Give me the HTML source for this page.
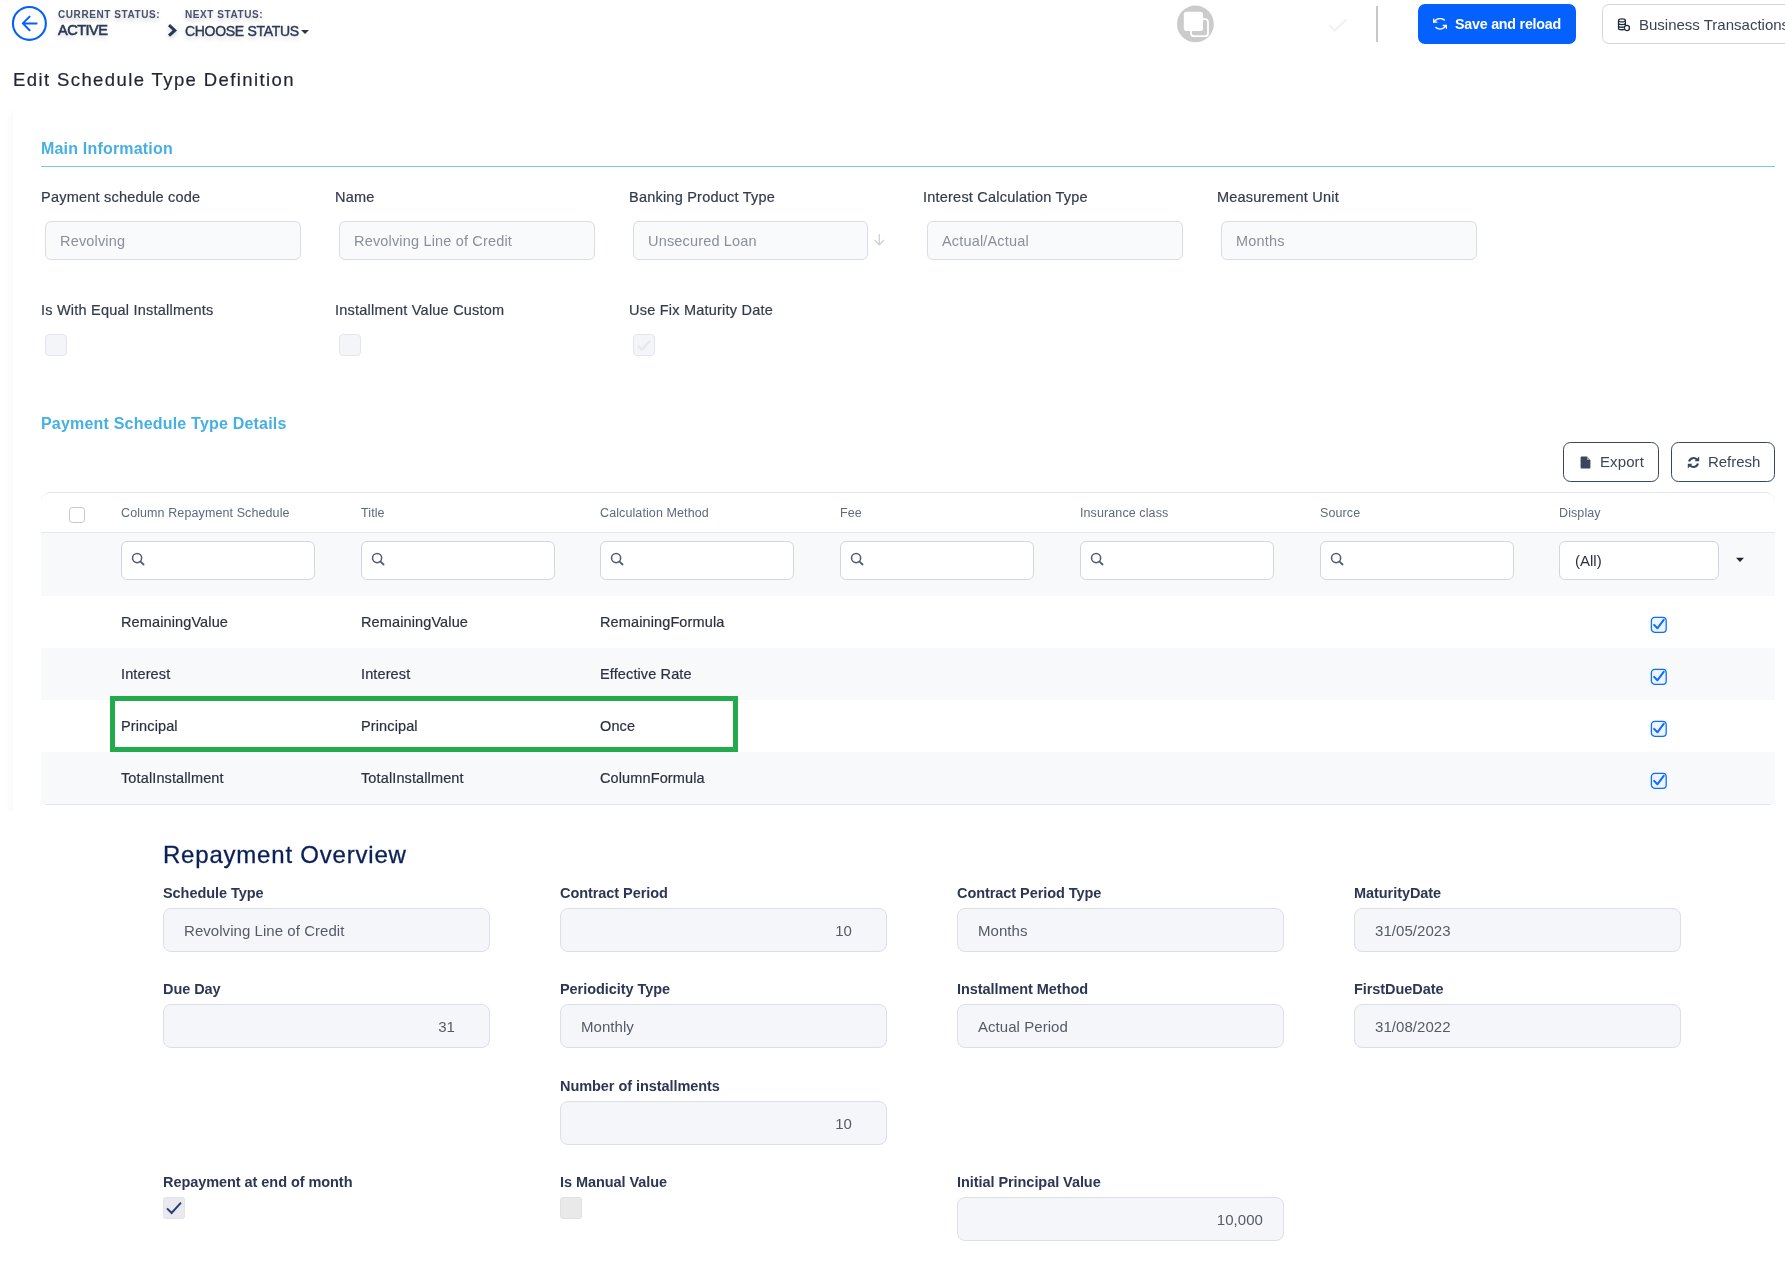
<!DOCTYPE html>
<html lang="en">
<head>
<meta charset="utf-8">
<title>Edit Schedule Type Definition</title>
<style>
*{box-sizing:border-box;margin:0;padding:0}
html,body{width:1785px;height:1277px;overflow:hidden;background:#fff}
body{position:relative;will-change:transform;font-family:"Liberation Sans",sans-serif;color:#2d3445;-webkit-font-smoothing:antialiased}
.a{position:absolute;white-space:nowrap;line-height:1}
/* header */
.st-s{font-size:10px;font-weight:700;letter-spacing:.58px;color:#46506a;text-shadow:0 3px 5px rgba(0,0,0,.2)}
.st-b{font-size:14px;font-weight:700;letter-spacing:-.4px;color:#2c3854;text-shadow:0 3px 5px rgba(0,0,0,.2)}
.title{font-size:18.5px;letter-spacing:1.4px;color:#1f2533;-webkit-text-stroke:.2px #1f2533}
.btn-blue{background:#0561fc;border-radius:7px;color:#fff;font-weight:700;font-size:15px}
.btn-w{background:#fff;border:1px solid #d3d7df;border-radius:7px;color:#3a4254;font-size:15px}
/* section 1 */
.sec{font-size:16px;font-weight:700;color:#45b0e4;letter-spacing:-.1px}
.lbl{font-size:14.5px;color:#333b4d;letter-spacing:.22px;-webkit-text-stroke:.2px #333b4d}
.inp{height:39px;border:1px solid #d9dce3;border-radius:6px;background:#f9fafc;color:#8a8f9b;font-size:14.5px;line-height:38.5px;padding-left:14px;letter-spacing:.17px}
.cb{width:22px;height:22px;border:1px solid #e3e6ed;border-radius:4px;background:#f4f5f9}
/* grid */
.btn-o{height:40px;border:1px solid #3a465c;border-radius:7.5px;background:#fff;color:#3a465c;font-size:15px;line-height:38px}
.th{font-size:12.5px;color:#5e6a7d;letter-spacing:.1px}
.fi{height:39px;border:1px solid #d2d6de;border-radius:6px;background:#fff}
.td{font-size:14.5px;color:#2b3140;letter-spacing:.12px;-webkit-text-stroke:.2px #2b3140}
.row{left:41px;width:1734px;height:52px}
.ck{width:17px;height:17px}
/* section 2 */
.h2{font-size:24px;color:#0a2058;letter-spacing:.79px;-webkit-text-stroke:.3px #0a2058}
.lb2{font-size:14.5px;font-weight:700;color:#2d3755;letter-spacing:-.06px}
.in2{width:327px;height:44px;border:1px solid #dcdfe6;border-radius:8px;background:#f5f6fa;color:#555b66;font-size:15px;line-height:44px;padding:0 20px;letter-spacing:.05px}
.r{text-align:right;padding-right:34px}
</style>
</head>
<body>
<!-- CARD -->
<div class="a" style="left:0;top:95px;width:1785px;height:716px;overflow:hidden"><div style="position:absolute;left:12.5px;top:12px;width:1800px;height:800px;border-radius:9px;background:#fff;box-shadow:-2px 3px 7px rgba(30,40,60,.038)"></div></div>
<!-- HEADER -->
<svg class="a" style="left:11px;top:5px" width="37" height="37" viewBox="0 0 37 37"><circle cx="18.4" cy="18.4" r="16.45" fill="#fff" stroke="#0561fc" stroke-width="2.1"/><path d="M25.6 18.4H12.2M18.6 11.6L11.8 18.4L18.6 25.2" fill="none" stroke="#0561fc" stroke-width="2" stroke-linecap="round" stroke-linejoin="round"/></svg>
<div class="a st-s" style="left:58px;top:10px">CURRENT STATUS:</div>
<div class="a st-b" style="left:58px;top:22.5px;font-size:14.5px;font-weight:400;letter-spacing:-.5px;-webkit-text-stroke:.6px #2c3854">ACTIVE</div>
<svg class="a" style="left:166px;top:22px;filter:drop-shadow(0 2px 2px rgba(0,0,0,.18))" width="14" height="17" viewBox="0 0 14 17"><path d="M3 3.2L8.8 8.4L3 13.6" fill="none" stroke="#2c3854" stroke-width="3"/></svg>
<div class="a st-s" style="left:185px;top:10px">NEXT STATUS:</div>
<div class="a st-b" style="left:185px;top:23.6px;font-size:14px;font-weight:400;letter-spacing:-.3px;-webkit-text-stroke:.4px #2c3854">CHOOSE STATUS</div>
<svg class="a" style="left:300px;top:29px" width="10" height="6" viewBox="0 0 10 6"><path d="M1 1h8L5 5z" fill="#2d3650"/></svg>
<div class="a title" style="left:13px;top:71px">Edit Schedule Type Definition</div>
<!-- header right -->
<svg class="a" style="left:1176px;top:5px" width="40" height="40" viewBox="0 0 40 40"><circle cx="19.4" cy="18.95" r="18.4" fill="#cbcbcb"/><rect x="15" y="14.1" width="17" height="17.05" rx="3" fill="none" stroke="#fff" stroke-width="1.8"/><rect x="7.8" y="6.8" width="19.2" height="19.2" rx="2.8" fill="#fff"/></svg>
<svg class="a" style="left:1327px;top:17px" width="22" height="16" viewBox="0 0 22 16"><path d="M2.5 8.5L7.8 13.5L19.5 2.5" fill="none" stroke="#f1f1f1" stroke-width="2.3"/></svg>
<div class="a" style="left:1376px;top:6px;width:2px;height:36px;background:#c6c6c6"></div>
<div class="a btn-blue" style="left:1418px;top:4px;width:158px;height:40px"></div>
<svg class="a" style="left:1433px;top:18.2px" width="14.2" height="11.6" viewBox="22.8 31.1 210.4 193.8" preserveAspectRatio="none"><g fill="none" stroke="#fff" stroke-width="22" stroke-linecap="round" stroke-linejoin="round"><polyline points="79.8 99.7 31.8 99.7 31.8 51.7"/><path d="M190.2,65.8a87.9,87.9,0,0,0-124.4,0L31.8,99.7"/><polyline points="176.2 156.3 224.2 156.3 224.2 204.3"/><path d="M65.8,190.2a87.9,87.9,0,0,0,124.4,0l34-33.9"/></g></svg>
<div class="a" style="left:1455px;top:17px;color:#fff;font-size:14.25px;font-weight:700;letter-spacing:-.22px">Save and reload</div>
<div class="a btn-w" style="left:1602px;top:4px;width:200px;height:40px"></div>
<svg class="a" style="left:1616px;top:17px" width="16" height="16" viewBox="0 0 16 16"><g fill="none" stroke="#222a3b" stroke-width="1.3"><ellipse cx="5.95" cy="3.4" rx="3.45" ry="1.55"/><path d="M2.5 3.4v7.8c0 .85 1.55 1.55 3.45 1.55s3.45-.7 3.45-1.55V3.4M2.5 6c0 .85 1.55 1.55 3.45 1.55S9.4 6.85 9.4 6M2.5 8.7c0 .85 1.55 1.55 3.45 1.55S9.4 9.55 9.4 8.7"/><circle cx="10.9" cy="11" r="2.55" fill="#fff"/></g></svg>
<div class="a" style="left:1639px;top:16.5px;color:#3a4254;font-size:15px">Business Transactions</div>
<!-- SECTION 1 -->
<div class="a sec" style="left:41px;top:141px;letter-spacing:.19px">Main Information</div>
<div class="a" style="left:41px;top:166px;width:1734px;height:1px;background:#7cc4e8"></div>
<div class="a lbl" style="left:41px;top:190px">Payment schedule code</div>
<div class="a lbl" style="left:335px;top:190px">Name</div>
<div class="a lbl" style="left:629px;top:190px">Banking Product Type</div>
<div class="a lbl" style="left:923px;top:190px">Interest Calculation Type</div>
<div class="a lbl" style="left:1217px;top:190px">Measurement Unit</div>
<div class="a inp" style="left:45px;top:221px;width:256px">Revolving</div>
<div class="a inp" style="left:339px;top:221px;width:256px">Revolving Line of Credit</div>
<div class="a inp" style="left:633px;top:221px;width:235px">Unsecured Loan</div>
<svg class="a" style="left:873px;top:233px" width="13" height="14" viewBox="0 0 13 14"><path d="M6.3 1.2v10.2M1.6 7l4.7 4.7L11 7" fill="none" stroke="#d0d2d6" stroke-width="1.4"/></svg>
<div class="a inp" style="left:927px;top:221px;width:256px">Actual/Actual</div>
<div class="a inp" style="left:1221px;top:221px;width:256px">Months</div>
<div class="a lbl" style="left:41px;top:303px">Is With Equal Installments</div>
<div class="a lbl" style="left:335px;top:303px">Installment Value Custom</div>
<div class="a lbl" style="left:629px;top:303px">Use Fix Maturity Date</div>
<div class="a cb" style="left:45px;top:334px"></div>
<div class="a cb" style="left:339px;top:334px"></div>
<div class="a cb" style="left:633px;top:334px"></div>
<svg class="a" style="left:636px;top:338px" width="16" height="14" viewBox="0 0 16 14"><path d="M2 7.8L5.8 11.6L14 2.8" fill="none" stroke="#e6e9ee" stroke-width="2.6"/></svg>
<div class="a sec" style="left:41px;top:416px;letter-spacing:.2px">Payment Schedule Type Details</div>
<!-- grid toolbar -->
<div class="a btn-o" style="left:1563px;top:442px;width:96px"></div>
<svg class="a" style="left:1579.5px;top:455.8px" width="11" height="13" viewBox="0 0 11 13"><path d="M.6 1.4A.9.9 0 0 1 1.5.5H6.9L10.4 4V11.6a.9.9 0 0 1-.9.9H1.5a.9.9 0 0 1-.9-.9z" fill="#3a465c"/><path d="M7 .6V3.9H10.3z" fill="#9aa3b3"/></svg>
<div class="a" style="left:1600px;top:454px;font-size:15px;color:#3a465c;letter-spacing:.1px">Export</div>
<div class="a btn-o" style="left:1671px;top:442px;width:104px"></div>
<svg class="a" style="left:1687px;top:455.5px" width="13" height="13" viewBox="0 0 13 13"><path d="M2.1 5.5A4.5 4.5 0 0 1 9.9 3.6M10.9 7.5A4.5 4.5 0 0 1 3.1 9.4" fill="none" stroke="#3a465c" stroke-width="2.1"/><path d="M12.2.6v4.6H7.6zM.8 12.4V7.8h4.6z" fill="#3a465c"/></svg>
<div class="a" style="left:1708px;top:454px;font-size:15px;color:#3a465c;letter-spacing:-.05px">Refresh</div>
<!-- GRID -->
<div class="a" style="left:41px;top:492px;width:1734px;height:41px;border-top:1px solid #e3e6eb;border-radius:9px 9px 0 0;border-bottom:1px solid #e6e8ed"></div>
<div class="a" style="left:69px;top:507px;width:16px;height:16px;border:1px solid #c3c8d1;border-radius:3.5px;background:#fff"></div>
<div class="a th" style="left:121px;top:507px">Column Repayment Schedule</div>
<div class="a th" style="left:361px;top:507px">Title</div>
<div class="a th" style="left:600px;top:507px">Calculation Method</div>
<div class="a th" style="left:840px;top:507px">Fee</div>
<div class="a th" style="left:1080px;top:507px">Insurance class</div>
<div class="a th" style="left:1320px;top:507px">Source</div>
<div class="a th" style="left:1559px;top:507px">Display</div>
<div class="a" style="left:41px;top:533px;width:1734px;height:63px;background:#f8f9fb"></div>
<div class="a fi" style="left:121px;top:541px;width:193.5px"></div>
<svg class="a" style="left:131px;top:552px" width="14" height="14" viewBox="0 0 14 14"><circle cx="6.1" cy="6.1" r="4.55" fill="none" stroke="#525d76" stroke-width="1.55"/><path d="M9.5 9.6L12.6 12.5" stroke="#525d76" stroke-width="1.8" stroke-linecap="round"/></svg>
<div class="a fi" style="left:361px;top:541px;width:193.5px"></div>
<svg class="a" style="left:371px;top:552px" width="14" height="14" viewBox="0 0 14 14"><circle cx="6.1" cy="6.1" r="4.55" fill="none" stroke="#525d76" stroke-width="1.55"/><path d="M9.5 9.6L12.6 12.5" stroke="#525d76" stroke-width="1.8" stroke-linecap="round"/></svg>
<div class="a fi" style="left:600px;top:541px;width:193.5px"></div>
<svg class="a" style="left:610px;top:552px" width="14" height="14" viewBox="0 0 14 14"><circle cx="6.1" cy="6.1" r="4.55" fill="none" stroke="#525d76" stroke-width="1.55"/><path d="M9.5 9.6L12.6 12.5" stroke="#525d76" stroke-width="1.8" stroke-linecap="round"/></svg>
<div class="a fi" style="left:840px;top:541px;width:193.5px"></div>
<svg class="a" style="left:850px;top:552px" width="14" height="14" viewBox="0 0 14 14"><circle cx="6.1" cy="6.1" r="4.55" fill="none" stroke="#525d76" stroke-width="1.55"/><path d="M9.5 9.6L12.6 12.5" stroke="#525d76" stroke-width="1.8" stroke-linecap="round"/></svg>
<div class="a fi" style="left:1080px;top:541px;width:193.5px"></div>
<svg class="a" style="left:1090px;top:552px" width="14" height="14" viewBox="0 0 14 14"><circle cx="6.1" cy="6.1" r="4.55" fill="none" stroke="#525d76" stroke-width="1.55"/><path d="M9.5 9.6L12.6 12.5" stroke="#525d76" stroke-width="1.8" stroke-linecap="round"/></svg>
<div class="a fi" style="left:1320px;top:541px;width:193.5px"></div>
<svg class="a" style="left:1330px;top:552px" width="14" height="14" viewBox="0 0 14 14"><circle cx="6.1" cy="6.1" r="4.55" fill="none" stroke="#525d76" stroke-width="1.55"/><path d="M9.5 9.6L12.6 12.5" stroke="#525d76" stroke-width="1.8" stroke-linecap="round"/></svg>
<div class="a fi" style="left:1559px;top:541px;width:160px"></div>
<div class="a" style="left:1575px;top:553px;font-size:15px;color:#2b3140">(All)</div>
<svg class="a" style="left:1735px;top:557px" width="10" height="6" viewBox="0 0 10 6"><path d="M1 .8h8L5 5z" fill="#1f2430"/></svg>
<div class="a td" style="left:121px;top:615px">RemainingValue</div>
<div class="a td" style="left:361px;top:615px">RemainingValue</div>
<div class="a td" style="left:600px;top:615px">RemainingFormula</div>
<svg class="a ck" style="left:1650px;top:616px" viewBox="0 0 17 17"><rect x="1.4" y="1.4" width="14.8" height="14.9" rx="3.3" fill="#eef4fe" stroke="#0d6efd" stroke-width="1.3"/><path d="M4.1 8.9L7.4 12.3L13.7 3.9" fill="none" stroke="#0d6efd" stroke-width="2" stroke-linecap="round" stroke-linejoin="round"/></svg>
<div class="a row" style="top:648px;background:#f8f9fb"></div>
<div class="a td" style="left:121px;top:667px">Interest</div>
<div class="a td" style="left:361px;top:667px">Interest</div>
<div class="a td" style="left:600px;top:667px">Effective Rate</div>
<svg class="a ck" style="left:1650px;top:668px" viewBox="0 0 17 17"><rect x="1.4" y="1.4" width="14.8" height="14.9" rx="3.3" fill="#eef4fe" stroke="#0d6efd" stroke-width="1.3"/><path d="M4.1 8.9L7.4 12.3L13.7 3.9" fill="none" stroke="#0d6efd" stroke-width="2" stroke-linecap="round" stroke-linejoin="round"/></svg>
<div class="a td" style="left:121px;top:719px">Principal</div>
<div class="a td" style="left:361px;top:719px">Principal</div>
<div class="a td" style="left:600px;top:719px">Once</div>
<svg class="a ck" style="left:1650px;top:720px" viewBox="0 0 17 17"><rect x="1.4" y="1.4" width="14.8" height="14.9" rx="3.3" fill="#eef4fe" stroke="#0d6efd" stroke-width="1.3"/><path d="M4.1 8.9L7.4 12.3L13.7 3.9" fill="none" stroke="#0d6efd" stroke-width="2" stroke-linecap="round" stroke-linejoin="round"/></svg>
<div class="a row" style="top:752px;background:#f8f9fb"></div>
<div class="a td" style="left:121px;top:771px">TotalInstallment</div>
<div class="a td" style="left:361px;top:771px">TotalInstallment</div>
<div class="a td" style="left:600px;top:771px">ColumnFormula</div>
<svg class="a ck" style="left:1650px;top:772px" viewBox="0 0 17 17"><rect x="1.4" y="1.4" width="14.8" height="14.9" rx="3.3" fill="#eef4fe" stroke="#0d6efd" stroke-width="1.3"/><path d="M4.1 8.9L7.4 12.3L13.7 3.9" fill="none" stroke="#0d6efd" stroke-width="2" stroke-linecap="round" stroke-linejoin="round"/></svg>
<div class="a" style="left:45px;top:804px;width:1726px;height:1px;background:#e1e5ec"></div>
<div class="a" style="left:110px;top:696px;width:628px;height:56px;border:5px solid #23ab4b"></div>
<!-- SECTION 2 -->
<div class="a h2" style="left:163px;top:843px">Repayment Overview</div>
<div class="a lb2" style="left:163px;top:886px">Schedule Type</div>
<div class="a in2" style="left:163px;top:908px">Revolving Line of Credit</div>
<div class="a lb2" style="left:560px;top:886px">Contract Period</div>
<div class="a in2 r" style="left:560px;top:908px">10</div>
<div class="a lb2" style="left:957px;top:886px">Contract Period Type</div>
<div class="a in2" style="left:957px;top:908px">Months</div>
<div class="a lb2" style="left:1354px;top:886px">MaturityDate</div>
<div class="a in2" style="left:1354px;top:908px">31/05/2023</div>
<div class="a lb2" style="left:163px;top:982px">Due Day</div>
<div class="a in2 r" style="left:163px;top:1004px">31</div>
<div class="a lb2" style="left:560px;top:982px">Periodicity Type</div>
<div class="a in2" style="left:560px;top:1004px">Monthly</div>
<div class="a lb2" style="left:957px;top:982px">Installment Method</div>
<div class="a in2" style="left:957px;top:1004px">Actual Period</div>
<div class="a lb2" style="left:1354px;top:982px">FirstDueDate</div>
<div class="a in2" style="left:1354px;top:1004px">31/08/2022</div>
<div class="a lb2" style="left:560px;top:1079px">Number of installments</div>
<div class="a in2 r" style="left:560px;top:1101px">10</div>
<div class="a lb2" style="left:957px;top:1175px">Initial Principal Value</div>
<div class="a in2" style="left:957px;top:1197px;text-align:right;padding-right:20px">10,000</div>
<div class="a lb2" style="left:163px;top:1175px">Repayment at end of month</div>
<div class="a lb2" style="left:560px;top:1175px">Is Manual Value</div>
<div class="a" style="left:163px;top:1197px;width:22px;height:22px;background:#e9eaef;border:1px solid #e1e3e8;border-radius:2.5px"></div>
<svg class="a" style="left:165px;top:1200px" width="18" height="16" viewBox="0 0 18 16"><path d="M2 8.4L6.6 13L16 2.6" fill="none" stroke="#2b3f70" stroke-width="2"/></svg>
<div class="a" style="left:560px;top:1197px;width:22px;height:22px;background:#e9e9e9;border:1px solid #e1e1e1;border-radius:3px"></div>
</body>
</html>
